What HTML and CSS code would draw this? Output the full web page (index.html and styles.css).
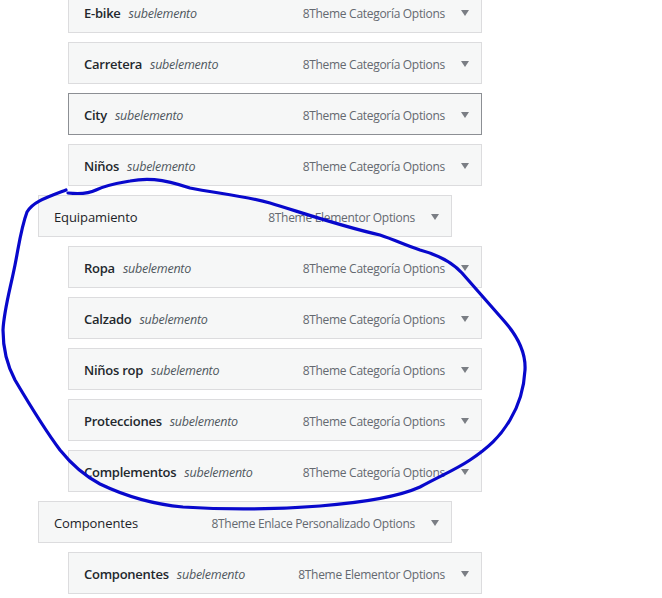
FILE: index.html
```html
<!DOCTYPE html>
<html lang="es">
<head>
<meta charset="utf-8">
<title>Menú</title>
<link rel="stylesheet" href="styles.css">
</head>
<body>
<div class="page">
  <ul class="menu">
    <li class="item depth-1"><span class="title">E-bike</span><span class="sub">subelemento</span><span class="controls"><span class="type">8Theme Categoría Options</span><span class="arrow"></span></span></li>
    <li class="item depth-1"><span class="title">Carretera</span><span class="sub">subelemento</span><span class="controls"><span class="type">8Theme Categoría Options</span><span class="arrow"></span></span></li>
    <li class="item depth-1 hover"><span class="title">City</span><span class="sub">subelemento</span><span class="controls"><span class="type">8Theme Categoría Options</span><span class="arrow"></span></span></li>
    <li class="item depth-1"><span class="title">Niños</span><span class="sub">subelemento</span><span class="controls"><span class="type">8Theme Categoría Options</span><span class="arrow"></span></span></li>
    <li class="item depth-0"><span class="title top">Equipamiento</span><span class="controls"><span class="type">8Theme Elementor Options</span><span class="arrow"></span></span></li>
    <li class="item depth-1"><span class="title">Ropa</span><span class="sub">subelemento</span><span class="controls"><span class="type">8Theme Categoría Options</span><span class="arrow"></span></span></li>
    <li class="item depth-1"><span class="title">Calzado</span><span class="sub">subelemento</span><span class="controls"><span class="type">8Theme Categoría Options</span><span class="arrow"></span></span></li>
    <li class="item depth-1"><span class="title">Niños rop</span><span class="sub">subelemento</span><span class="controls"><span class="type">8Theme Categoría Options</span><span class="arrow"></span></span></li>
    <li class="item depth-1"><span class="title">Protecciones</span><span class="sub">subelemento</span><span class="controls"><span class="type">8Theme Categoría Options</span><span class="arrow"></span></span></li>
    <li class="item depth-1"><span class="title">Complementos</span><span class="sub">subelemento</span><span class="controls"><span class="type">8Theme Categoría Options</span><span class="arrow"></span></span></li>
    <li class="item depth-0"><span class="title top">Componentes</span><span class="controls"><span class="type">8Theme Enlace Personalizado Options</span><span class="arrow"></span></span></li>
    <li class="item depth-1"><span class="title">Componentes</span><span class="sub">subelemento</span><span class="controls"><span class="type">8Theme Elementor Options</span><span class="arrow"></span></span></li>
  </ul>
  <svg class="scribble" width="662" height="598" viewBox="0 0 662 598" aria-hidden="true">
    <path d="M68 193 C 78 194, 88 194, 96 190 C 104 186, 112 184, 130 181 C 145 178, 160 178, 190 188 C 215 193, 245 196, 270 203 C 300 212, 340 226, 380 235 C 395 240, 405 245, 420 250 C 435 254, 450 260, 462 273 C 475 288, 490 305, 505 322 C 518 337, 526 352, 525 370 C 524 390, 519 405, 510 420 C 500 437, 488 448, 470 460 C 455 470, 442 475, 420 487 C 400 496, 370 502, 320 506 C 280 509, 230 510, 183 507 C 150 504, 125 496, 100 484 C 85 476, 72 465, 60 450 C 45 430, 28 402, 15 380 C 7 365, 3 348, 3 330 C 4 310, 10 290, 15 265 C 19 245, 21 228, 27 212 C 33 202, 45 198, 66 190" fill="none" stroke="#0808cc" stroke-width="3.2" stroke-linecap="round" stroke-linejoin="round"/>
  </svg>
</div>
</body>
</html>
```
FILE: styles.css
```css
html, body {
  margin: 0;
  padding: 0;
  background: #ffffff;
}

.page {
  position: relative;
  width: 662px;
  height: 598px;
  overflow: hidden;
}

.menu {
  list-style: none;
  margin: -9px 0 0 0;
  padding: 0;
  display: flex;
  flex-direction: column;
  gap: 9px;
  font-family: "Open Sans", "Noto Sans", sans-serif;
}

.item {
  box-sizing: border-box;
  width: 414px;
  height: 42px;
  display: flex;
  align-items: center;
  padding: 2px 0 0 15px;
  background: #f6f7f7;
  border: 1px solid #dcdcde;
  font-size: 13px;
}

.depth-0 { margin-left: 38px; }
.depth-1 { margin-left: 68px; }

.item.hover { border-color: #8c8f94; }

.title {
  font-weight: 600;
  color: #23282d;
  letter-spacing: -0.25px;
}

.title.top {
  font-weight: 400;
  color: #1d2327;
  letter-spacing: -0.1px;
}

.sub {
  margin-left: 8px;
  font-style: italic;
  font-size: 12.5px;
  letter-spacing: -0.25px;
  color: #50575e;
}

.controls {
  margin-left: auto;
  display: flex;
  align-items: center;
}

.type {
  color: #646970;
  font-size: 12px;
  letter-spacing: -0.3px;
}

.arrow {
  width: 0;
  height: 0;
  margin: 0 12px 0 16px;
  border-left: 4px solid transparent;
  border-right: 4px solid transparent;
  border-top: 6px solid #7a7e84;
}

.scribble {
  position: absolute;
  left: 0;
  top: 0;
  pointer-events: none;
}
```
